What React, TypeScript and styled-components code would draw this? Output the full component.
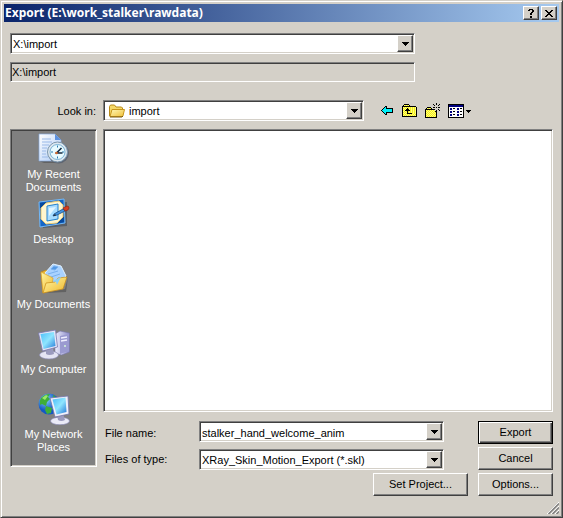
import React from "react";
import styled, { createGlobalStyle, css } from "styled-components";

const face = "#d4d0c8";
const shade = "#808080";
const dark = "#404040";

const sunken = css`
  border: 1px solid;
  border-color: ${shade} #fff #fff ${shade};
  box-shadow: inset 1px 1px 0 ${dark}, inset -1px -1px 0 ${face};
`;

const raised = css`
  background: ${face};
  border: 1px solid;
  border-color: #fff ${dark} ${dark} #fff;
  box-shadow: inset -1px -1px 0 ${shade};
`;

const GlobalStyle = createGlobalStyle`
  *, *::before, *::after { box-sizing: border-box; }
  body { margin: 0; background: ${face}; }
  body, button, input, select {
    font: 11px/13px "Liberation Sans", Arial, sans-serif;
    color: #000;
  }
  button { padding: 0; margin: 0; }
  svg { display: block; }
`;

const Dialog = styled.form`
  display: flex;
  flex-direction: column;
  min-height: 100vh;
  padding: 3px;
  background: ${face};
  border: 1px solid;
  border-color: ${face} ${dark} ${dark} ${face};
  box-shadow: inset 1px 1px 0 #fff, inset -1px -1px 0 ${shade};
`;

const TitleBar = styled.header`
  display: flex;
  align-items: center;
  gap: 2px;
  height: 18px;
  padding: 0 2px 0 1px;
  background: linear-gradient(to right, #0a246a, #a6caf0);
`;

const Title = styled.h1`
  flex: 1;
  margin: 0;
  font: bold 12px/18px "Noto Sans", Tahoma, sans-serif;
  color: #fff;
  white-space: nowrap;
`;

const CaptionButton = styled.button`
  ${raised}
  display: grid;
  place-items: center;
  width: 16px;
  height: 14px;
`;

const Paths = styled.section`
  display: grid;
  gap: 8px;
  margin: 11px 144px 18px 6px;
`;

const Frame = styled.div<{ $align?: string }>`
  ${sunken}
  display: grid;
  grid-template-columns: auto 1fr 16px;
  align-items: center;
  align-self: ${(p) => p.$align ?? "auto"};
  min-width: 0;
  height: 21px;
  padding: 1px;
  background: #fff;
`;

const fieldText = css`
  grid-row: 1;
  grid-column: 1 / -1;
  width: 100%;
  height: 17px;
  margin: 0;
  border: 0;
  border-radius: 0;
  outline: 0;
  background: transparent;
`;

const Select = styled.select<{ $indent?: number }>`
  ${fieldText}
  appearance: none;
  padding: 2px 18px 0 ${(p) => p.$indent ?? 1}px;
`;

const NameInput = styled.input`
  ${fieldText}
  padding: 2px 18px 0 1px;
`;

const ArrowCap = styled.span`
  ${raised}
  display: grid;
  place-items: center;
  grid-row: 1;
  grid-column: 3;
  height: 17px;
  pointer-events: none;
`;

const FieldIcon = styled.span`
  grid-row: 1;
  grid-column: 1;
  padding-left: 4px;
  pointer-events: none;
`;

const CurrentPath = styled.input`
  ${sunken}
  width: 100%;
  height: 20px;
  padding: 0 1px;
  background: ${face};
  outline: 0;
`;

const Browser = styled.main`
  flex: 1;
  display: grid;
  grid-template-columns: 87px minmax(0, 1fr);
  grid-template-rows: auto 1fr auto;
  column-gap: 6px;
  margin: 0 6px;
`;

const LookLabel = styled.label`
  padding: 1px 1px 0 0;
  line-height: 21px;
  text-align: right;
`;

const LookRow = styled.div`
  display: grid;
  grid-template-columns: minmax(0, 1fr) 189px;
  margin-bottom: 8px;
`;

const Toolbar = styled.div`
  display: flex;
  padding-left: 11px;
`;

const ToolButton = styled.button<{ $wide?: boolean }>`
  display: grid;
  place-items: center;
  width: ${(p) => (p.$wide ? 30 : 23)}px;
  height: 21px;
  background: transparent;
  border: 0;
`;

const Places = styled.nav`
  ${sunken}
  grid-row: 2 / 4;
  display: flex;
  flex-direction: column;
  margin-bottom: 29px;
  padding: 3px 1px 0;
  background: ${shade};
`;

const Place = styled.button`
  display: flex;
  flex-direction: column;
  align-items: center;
  gap: 3px;
  height: 65px;
  background: transparent;
  border: 0;
  color: #fff;
`;

const PlaceName = styled.span`
  max-width: 76px;
`;

const FileList = styled.section`
  ${sunken}
  background: #fff;
`;

const Footer = styled.div`
  display: grid;
  grid-template-columns: 96px minmax(0, 1fr) 24px 10px 75px;
  grid-template-rows: repeat(3, 23px);
  row-gap: 3px;
  padding-top: 9px;
`;

const FieldLabel = styled.label`
  padding: 1px 0 0 2px;
  line-height: 23px;
`;

const PushButton = styled.button<{ $default?: boolean }>`
  ${raised}
  grid-column: 5;
  ${(p) =>
    p.$default &&
    css`
      border-color: #000;
      box-shadow: inset 1px 1px 0 #fff, inset -1px -1px 0 ${dark}, inset -2px -2px 0 ${shade};
    `}
`;

const ProjectButton = styled(PushButton)`
  grid-column: 2 / 4;
  justify-self: end;
  width: 95px;
`;

const GripRow = styled.footer`
  display: flex;
  justify-content: flex-end;
  align-items: flex-end;
  height: 18px;
`;

/* Draws a small bitmap: one string per row, one letter per pixel. */
const inks: Record<string, string> = {
  k: "#000000",
  y: "#f4ee1c",
  l: "#ffff7a",
  c: "#00f0f8",
  w: "#ffffff",
  n: "#000080",
};

const Bitmap = ({ rows }: { rows: string[] }) => (
  <svg width={rows[0].length} height={rows.length} shapeRendering="crispEdges" aria-hidden="true">
    {rows.flatMap((row, y) =>
      [...row].map((ch, x) =>
        inks[ch] ? <rect key={`${x}-${y}`} x={x} y={y} width="1" height="1" fill={inks[ch]} /> : null
      )
    )}
  </svg>
);

const arrowDown = ["kkkkkkk", ".kkkkk.", "..kkk..", "...k..."];
const smallArrow = ["kkkkk", ".kkk.", "..k.."];
const helpMark = [".kkkk.", "kk..kk", "....kk", "...kk.", "..kk..", "..kk..", "......", "..kk..", "..kk.."];
const closeMark = ["kk....kk", ".kk..kk.", "..kkkk..", "...kk...", "..kkkk..", ".kk..kk.", "kk....kk"];
const back = [
  "....kk......",
  "...kck......",
  "..kcckkkkkkk",
  ".kccccccccck",
  "kcccccccccck",
  ".kccccccccck",
  "..kcckkkkkkk",
  "...kck......",
  "....kk......",
];
const upFolder = [
  "..kkkkk........",
  ".klylylk.......",
  "kkkkkkkkkkkkkk.",
  "klylylylylylylk",
  "kylylkylylylylk",
  "klylkkklylylylk",
  "kylkkkkkylylylk",
  "klylykylylylylk",
  "kylylkylylylylk",
  "klylykkkkkylylk",
  "kylylylylylylyk",
  "klylylylylylylk",
  "kkkkkkkkkkkkkkk",
];
const newFolder = [
  "...........k....",
  "........k..k..k.",
  ".........k...k..",
  "................",
  "..kkkk..kk.k.kk.",
  ".klylyk.........",
  "kkkkkkkkkk...k..",
  "klylylylyl.k..k.",
  "kylylylylykk....",
  "klylylylylyk....",
  "kylylylylylk....",
  "klylylylylyk....",
  "kylylylylylk....",
  "klylylylylyk....",
  "kkkkkkkkkkkk....",
];
const views = [
  "kkkkkkkkkkkkkkkk",
  "knnnnnnnnnnnnnnk",
  "knnnnnnnnnnnnnnk",
  "kwwwwwwwwwwwwwwk",
  "kwnnwkkwwnnwkkwk",
  "kwnnwwwwwnnwwwwk",
  "kwwwwwwwwwwwwwwk",
  "kwnnwkkwwnnwkkwk",
  "kwnnwwwwwnnwwwwk",
  "kwwwwwwwwwwwwwwk",
  "kwnnwkkwwnnwkkwk",
  "kwnnwwwwwnnwwwwk",
  "kwwwwwwwwwwwwwwk",
  "kkkkkkkkkkkkkkkk",
];
const viewsMenu = views.map((row, i) => row + ".." + (i >= 6 && i <= 8 ? smallArrow[i - 6] : "....."));

const FolderIcon = () => (
  <svg width="16" height="16" viewBox="0 0 16 16" aria-hidden="true">
    <defs>
      <linearGradient id="fold" x1="0" y1="0" x2="1" y2="1">
        <stop offset="0" stopColor="#fff8b8" />
        <stop offset="1" stopColor="#f0c038" />
      </linearGradient>
    </defs>
    <path d="M.5 13V3.500l1-1.500h4l1.500 2h5.500l1 1V13z" fill="#f5d868" stroke="#b88a18" />
    <path d="m1 13.500 2-7h12.500l-1.500 6.200-.8.8z" fill="url(#fold)" stroke="#c8961c" />
    <path d="M1 14h12l1-1" fill="none" stroke="#7a5c14" />
  </svg>
);

const RecentIcon = () => (
  <svg width="32" height="32" viewBox="0 0 32 32" aria-hidden="true">
    <defs>
      <linearGradient id="paper" x1="0" y1="0" x2="1" y2="1">
        <stop offset="0" stopColor="#fff" />
        <stop offset="1" stopColor="#a9c8f5" />
      </linearGradient>
    </defs>
    <path d="M1 28 6 30h18v-2z" fill="#444" opacity=".5" />
    <path d="M1 1h16l6 6v21H1z" fill="url(#paper)" stroke="#86a9dc" strokeWidth=".7" />
    <path d="M17 1v6h6z" fill="#5d91de" />
    <path d="M4 6h9M4 9h10M4 12h7M4 15h5M4 18h4M4 21h4M4 24h6" stroke="#9ab9e7" />
    <circle cx="20.500" cy="20" r="10.500" fill="#5f6672" />
    <circle cx="19.500" cy="19" r="10" fill="#dce6ee" stroke="#7c97ad" />
    <circle cx="19.500" cy="19" r="7.500" fill="#e8fbff" stroke="#79b3d5" />
    <path d="M19.500 12.500v2M19.500 23.500v2M13 19h2M24 19h2" stroke="#297db2" />
    <path d="m18.500 20 5-5M17.500 20h7" stroke="#13293f" strokeWidth="1.600" />
    <circle cx="18.500" cy="20" r="1.300" fill="#d5692c" />
  </svg>
);

const DesktopIcon = () => (
  <svg width="32" height="32" viewBox="0 0 32 32" aria-hidden="true">
    <path d="m3 6 26-2v24L5 30z" fill="#414955" opacity=".6" />
    <path d="m1 4 25-3 1 24-25 4z" fill="#1666c6" stroke="#74b8f5" />
    <path d="m2 5 7-1-7 9zM26 15v9l-9 2z" fill="#084a9f" />
    <path d="m8 5 13-2 4 4v12l-6 6-11 1-5-5V10z" fill="#fff6cf" stroke="#e6c977" />
    <path d="m9 8 11-2v15L9 23z" fill="#a8dcff" stroke="#2481ce" />
    <path d="m11 10 7-1-7 9z" fill="#e1f5ff" />
    <path d="m16 16 9-5 2 2-8 4-4 1z" fill="#4696e1" stroke="#174d8b" strokeWidth=".8" />
    <path d="m15 18 2-2 1 1.500z" fill="#222" />
    <path d="m25 10 4-2q2 0 2 2l-1 2-3 1z" fill="#d83c20" stroke="#8c2812" strokeWidth=".7" />
  </svg>
);

const DocumentsIcon = () => (
  <svg width="32" height="32" viewBox="0 0 32 32" aria-hidden="true">
    <defs>
      <linearGradient id="docfold" x1="0" y1="0" x2="1" y2="1">
        <stop offset="0" stopColor="#fff7a5" />
        <stop offset="1" stopColor="#efb72c" />
      </linearGradient>
    </defs>
    <path d="m6 30 21-4 3-12-2 15z" fill="#444" opacity=".5" />
    <path d="m3 9 5-2 3 3 12-2v15L5 30z" fill="#e9b735" stroke="#b58118" strokeWidth=".7" />
    <path d="m7 10 8-9 8 2 5 10-13 12z" fill="#a9d2ff" stroke="#e2f2ff" />
    <path d="m13 6 3-3 4 1-3 3zM10 11l10-3M13 14l9-3" fill="#5399e5" stroke="#78b0ee" />
    <path d="m3 9 12 6-1 9-9 6z" fill="url(#docfold)" stroke="#d9a129" strokeWidth=".7" />
    <path d="m5 30 3-10 9-1 3-4 9-1-4 12z" fill="url(#docfold)" stroke="#c78b17" strokeWidth=".7" />
    <path d="m15 18 8-4-4 8-1-3z" fill="#8ed0f4" />
  </svg>
);

const ComputerIcon = () => (
  <svg width="32" height="32" viewBox="0 0 32 32" aria-hidden="true">
    <defs>
      <linearGradient id="screen" x1="0" y1="0" x2="1" y2="1">
        <stop offset="0" stopColor="#4abdf8" />
        <stop offset=".5" stopColor="#8fe5ff" />
        <stop offset="1" stopColor="#2478d8" />
      </linearGradient>
      <linearGradient id="tower">
        <stop offset="0" stopColor="#eeeefe" />
        <stop offset="1" stopColor="#8c8cc8" />
      </linearGradient>
    </defs>
    <path d="m17 6 5-3 9.500 2v19l-8 3-6.500-2z" fill="url(#tower)" stroke="#7777ac" strokeWidth=".6" />
    <path d="M22 8v18l9-3V6z" fill="#9a9ad0" />
    <path d="m23 10 6-1M23 13l6-1" stroke="#eeeeff" strokeWidth="1.500" />
    <circle cx="27" cy="18" r="1" fill="#d4f6da" />
    <ellipse cx="11" cy="27" rx="9.500" ry="4" fill="#e4e4f4" stroke="#8c8cb6" strokeWidth=".7" />
    <path d="M8 20h7l1 6q-5 2-8 0z" fill="#9a9abe" />
    <path d="m.5 5 17-3 2 17-15 4z" fill="#e6e6f8" stroke="#7878ad" strokeWidth=".8" />
    <path d="m2.500 6 13.500-2 1.500 14-12 3z" fill="url(#screen)" />
  </svg>
);

const NetworkIcon = () => (
  <svg width="32" height="32" viewBox="0 0 32 32" aria-hidden="true">
    <defs>
      <radialGradient id="globe" cx=".35" cy=".3">
        <stop offset="0" stopColor="#8ad6ff" />
        <stop offset="1" stopColor="#1458c4" />
      </radialGradient>
    </defs>
    <circle cx="11" cy="11" r="10.500" fill="url(#globe)" />
    <path d="M3 5q4-4 9-4l-2 3 2 2-3 3-1 4-4-2-2 1Q1 8 3 5zM8 13l6 2-1 5-4 1-2-4zM15 2l4 3-4 1z" fill="#3fae38" />
    <path d="m4 5 4-3 2 1-3 4z" fill="#9be66a" />
    <ellipse cx="22" cy="28" rx="9.500" ry="3.800" fill="#eaeaf6" stroke="#8585ae" strokeWidth=".7" />
    <path d="m19 22 6-1 2 6q-4 2-7 0z" fill="#9a9abd" />
    <path d="m12 5 18-2 1 18-14 3z" fill="#f0f0fa" stroke="#7474a7" strokeWidth=".8" />
    <path d="m14.500 6.500 13-2 1 14.500-10 2.500z" fill="url(#screen)" />
  </svg>
);

const Grip = () => (
  <svg width="12" height="12" aria-hidden="true">
    <path d="M0 12 12 0M4 12l8-8M8 12l4-4" stroke="#fff" />
    <path d="M1.500 12 12 1.500M5.500 12 12 5.500M9.500 12 12 9.500" stroke={shade} strokeWidth="1.500" />
  </svg>
);

const places = [
  { name: "My Recent Documents", icon: <RecentIcon /> },
  { name: "Desktop", icon: <DesktopIcon /> },
  { name: "My Documents", icon: <DocumentsIcon /> },
  { name: "My Computer", icon: <ComputerIcon /> },
  { name: "My Network Places", icon: <NetworkIcon /> },
];

const Arrow = () => (
  <ArrowCap>
    <Bitmap rows={arrowDown} />
  </ArrowCap>
);

export default function App() {
  return (
    <>
      <GlobalStyle />
      <Dialog onSubmit={(e) => e.preventDefault()}>
        <TitleBar>
          <Title>Export (E:\work_stalker\rawdata)</Title>
          <CaptionButton type="button" aria-label="Help">
            <Bitmap rows={helpMark} />
          </CaptionButton>
          <CaptionButton type="button" aria-label="Close">
            <Bitmap rows={closeMark} />
          </CaptionButton>
        </TitleBar>
        <Paths>
          <Frame>
            <Select aria-label="Recent paths">
              <option>X:\import</option>
            </Select>
            <Arrow />
          </Frame>
          <CurrentPath aria-label="Current path" readOnly value="X:\import" />
        </Paths>
        <Browser>
          <LookLabel htmlFor="look">Look in:</LookLabel>
          <LookRow>
            <Frame>
              <FieldIcon>
                <FolderIcon />
              </FieldIcon>
              <Select id="look" $indent={24}>
                <option>import</option>
              </Select>
              <Arrow />
            </Frame>
            <Toolbar>
              <ToolButton type="button" aria-label="Back">
                <Bitmap rows={back} />
              </ToolButton>
              <ToolButton type="button" aria-label="Up one level">
                <Bitmap rows={upFolder} />
              </ToolButton>
              <ToolButton type="button" aria-label="New folder">
                <Bitmap rows={newFolder} />
              </ToolButton>
              <ToolButton type="button" aria-label="Views" $wide>
                <Bitmap rows={viewsMenu} />
              </ToolButton>
            </Toolbar>
          </LookRow>
          <Places aria-label="Places">
            {places.map((p) => (
              <Place type="button" key={p.name}>
                {p.icon}
                <PlaceName>{p.name}</PlaceName>
              </Place>
            ))}
          </Places>
          <FileList aria-label="Files" />
          <Footer>
            <FieldLabel htmlFor="name">File name:</FieldLabel>
            <Frame $align="start">
              <NameInput id="name" defaultValue="stalker_hand_welcome_anim" />
              <Arrow />
            </Frame>
            <PushButton type="submit" $default>
              Export
            </PushButton>
            <FieldLabel htmlFor="type">Files of type:</FieldLabel>
            <Frame $align="end">
              <Select id="type">
                <option>XRay_Skin_Motion_Export (*.skl)</option>
              </Select>
              <Arrow />
            </Frame>
            <PushButton type="button">Cancel</PushButton>
            <ProjectButton type="button">Set Project...</ProjectButton>
            <PushButton type="button">Options...</PushButton>
          </Footer>
        </Browser>
        <GripRow>
          <Grip />
        </GripRow>
      </Dialog>
    </>
  );
}
